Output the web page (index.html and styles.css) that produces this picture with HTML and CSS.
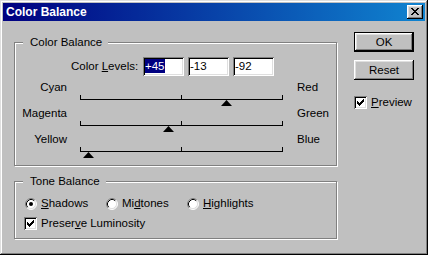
FILE: index.html
```html
<!DOCTYPE html>
<html>
<head>
<meta charset="utf-8">
<link rel="stylesheet" href="styles.css">
</head>
<body>
<div class="window">
  <div class="titlebar">
    <span class="title">Color Balance</span>
    <div class="close"><svg class="x" width="8" height="7" viewBox="0 0 8 7" shape-rendering="crispEdges"><path fill="#000" d="M0 0h2v1H0zM6 0h2v1H6zM1 1h2v1H1zM5 1h2v1H5zM2 2h4v1H2zM3 3h2v1H3zM2 4h4v1H2zM1 5h2v1H1zM5 5h2v1H5zM0 6h2v1H0zM6 6h2v1H6z"/></svg></div>
  </div>
  <div class="body">
    <div class="main">
      <div class="group g1">
        <div class="legend">Color Balance</div>
        <div class="levels">
          <span class="levels-label">Color <u>L</u>evels:</span>
          <div class="field"><span class="sel">+45</span></div>
          <div class="field">-13</div>
          <div class="field">-92</div>
        </div>
        <div class="slider first">
          <div class="slider-labels"><span class="lab-l">Cyan</span><span class="lab-r">Red</span></div>
          <div class="track"><svg class="thumb" style="left:141px" width="11" height="6" viewBox="0 0 11 6"><path d="M5.5 0L11 6H0z" fill="#000"/></svg></div>
        </div>
        <div class="slider">
          <div class="slider-labels"><span class="lab-l">Magenta</span><span class="lab-r">Green</span></div>
          <div class="track"><svg class="thumb" style="left:83px" width="11" height="6" viewBox="0 0 11 6"><path d="M5.5 0L11 6H0z" fill="#000"/></svg></div>
        </div>
        <div class="slider">
          <div class="slider-labels"><span class="lab-l">Yellow</span><span class="lab-r">Blue</span></div>
          <div class="track"><svg class="thumb" style="left:3px" width="11" height="6" viewBox="0 0 11 6"><path d="M5.5 0L11 6H0z" fill="#000"/></svg></div>
        </div>
      </div>
      <div class="group g2">
        <div class="legend">Tone Balance</div>
        <div class="radios">
          <div class="radio-opt">
            <svg class="radio" width="12" height="12" viewBox="0 0 12 12"><circle cx="6" cy="6" r="5" fill="#fff"/><path d="M2.11 9.89A5.5 5.5 0 0 1 9.89 2.11" stroke="#808080" fill="none"/><path d="M9.89 2.11A5.5 5.5 0 0 1 2.11 9.89" stroke="#fff" fill="none"/><path d="M2.82 9.18A4.5 4.5 0 0 1 9.18 2.82" stroke="#000" fill="none"/><path d="M9.18 2.82A4.5 4.5 0 0 1 2.82 9.18" stroke="#dfdfdf" fill="none"/><circle cx="6" cy="6" r="2" fill="#000"/></svg>
            <span><u>S</u>hadows</span>
          </div>
          <div class="radio-opt">
            <svg class="radio" width="12" height="12" viewBox="0 0 12 12"><circle cx="6" cy="6" r="5" fill="#fff"/><path d="M2.11 9.89A5.5 5.5 0 0 1 9.89 2.11" stroke="#808080" fill="none"/><path d="M9.89 2.11A5.5 5.5 0 0 1 2.11 9.89" stroke="#fff" fill="none"/><path d="M2.82 9.18A4.5 4.5 0 0 1 9.18 2.82" stroke="#000" fill="none"/><path d="M9.18 2.82A4.5 4.5 0 0 1 2.82 9.18" stroke="#dfdfdf" fill="none"/></svg>
            <span>Mi<u>d</u>tones</span>
          </div>
          <div class="radio-opt">
            <svg class="radio" width="12" height="12" viewBox="0 0 12 12"><circle cx="6" cy="6" r="5" fill="#fff"/><path d="M2.11 9.89A5.5 5.5 0 0 1 9.89 2.11" stroke="#808080" fill="none"/><path d="M9.89 2.11A5.5 5.5 0 0 1 2.11 9.89" stroke="#fff" fill="none"/><path d="M2.82 9.18A4.5 4.5 0 0 1 9.18 2.82" stroke="#000" fill="none"/><path d="M9.18 2.82A4.5 4.5 0 0 1 2.82 9.18" stroke="#dfdfdf" fill="none"/></svg>
            <span><u>H</u>ighlights</span>
          </div>
        </div>
        <div class="check-row">
          <div class="checkbox"><svg width="7" height="7" viewBox="0 0 7 7" shape-rendering="crispEdges"><path fill="#000" d="M6 0h1v1H6zM5 1h2v1H5zM0 2h1v1H0zM4 2h3v1H4zM0 3h2v1H0zM3 3h3v1H3zM0 4h5v1H0zM1 5h3v1H1zM2 6h1v1H2z"/></svg></div>
          <span>Preser<u>v</u>e Luminosity</span>
        </div>
      </div>
    </div>
    <div class="side">
      <div class="btn default"><span>OK</span></div>
      <div class="btn reset"><span>Reset</span></div>
      <div class="check-row preview">
        <div class="checkbox"><svg width="7" height="7" viewBox="0 0 7 7" shape-rendering="crispEdges"><path fill="#000" d="M6 0h1v1H6zM5 1h2v1H5zM0 2h1v1H0zM4 2h3v1H4zM0 3h2v1H0zM3 3h3v1H3zM0 4h5v1H0zM1 5h3v1H1zM2 6h1v1H2z"/></svg></div>
        <span><u>P</u>review</span>
      </div>
    </div>
  </div>
</div>
</body>
</html>
```

FILE: styles.css
```css
html, body {
  margin: 0;
  padding: 0;
  background: #c0c0c0;
}
body {
  font-family: "Liberation Sans", Arial, sans-serif;
  font-size: 11.5px;
  line-height: 13px;
  color: #000;
}
u {
  text-decoration: underline;
  text-underline-offset: 1px;
}
.window {
  width: 428px;
  height: 255px;
  box-sizing: border-box;
  background: #c0c0c0;
  padding: 3px;
  box-shadow: inset -1px -1px #000, inset 1px 1px #dfdfdf, inset -2px -2px #808080, inset 2px 2px #fff;
  display: flex;
  flex-direction: column;
}
.titlebar {
  height: 18px;
  display: flex;
  align-items: center;
  justify-content: space-between;
  padding: 0 2px 0 3px;
  background: linear-gradient(to right, #000080, #1084d0);
  color: #fff;
  font-weight: bold;
  font-size: 12px;
}
.close {
  width: 16px;
  height: 14px;
  box-sizing: border-box;
  background: #c0c0c0;
  box-shadow: inset -1px -1px #000, inset 1px 1px #fff, inset -2px -2px #808080, inset 2px 2px #dfdfdf;
  padding: 3px 0 0 4px;
}
.x {
  display: block;
}
.body {
  flex: 1;
  display: flex;
  padding: 11px;
  gap: 17px;
}
.main {
  width: 323px;
  display: flex;
  flex-direction: column;
}
.group {
  border: 1px solid #808080;
  box-shadow: inset 1px 1px #fff, 1px 1px #fff;
  display: flex;
  flex-direction: column;
  align-items: flex-start;
}
.g1 {
  margin-top: 10px;
  padding-bottom: 7px;
}
.g2 {
  margin-top: 15px;
  padding-bottom: 8px;
}
.legend {
  margin: -7px 0 0 8px;
  padding: 0 6px 0 7px;
  background: #c0c0c0;
  height: 13px;
}
.levels {
  display: flex;
  align-items: center;
  margin-top: 8px;
  padding-left: 56px;
  height: 19px;
}
.levels-label {
  width: 72px;
}
.field {
  width: 41px;
  height: 19px;
  box-sizing: border-box;
  background: #fff;
  box-shadow: inset 1px 1px #808080, inset -1px -1px #fff, inset 2px 2px #000, inset -2px -2px #dfdfdf;
  padding: 3px 2px 0;
  margin-right: 4px;
}
.sel {
  background: #000080;
  color: #fff;
  padding: 1px 0;
}
.slider {
  margin-top: 1px;
}
.slider.first {
  margin-top: 5px;
}
.slider-labels {
  display: flex;
  height: 13px;
}
.lab-l {
  width: 52px;
  text-align: right;
}
.lab-r {
  margin-left: 230px;
}
.track {
  position: relative;
  width: 203px;
  height: 4px;
  border-bottom: 1px solid #000;
  margin: 1px 0 6px 65px;
  background:
    linear-gradient(#000, #000) 0 0 / 1px 100% no-repeat,
    linear-gradient(#000, #000) 101px 0 / 1px 100% no-repeat,
    linear-gradient(#000, #000) 202px 0 / 1px 100% no-repeat;
}
.thumb {
  position: absolute;
  top: 5px;
  display: block;
}
.radios {
  display: flex;
  margin-top: 9px;
  padding-left: 10px;
  height: 13px;
}
.radio-opt {
  width: 81px;
  display: flex;
  align-items: center;
}
.radio {
  display: block;
  margin-right: 4px;
  flex: none;
}
.check-row {
  display: flex;
  align-items: center;
  height: 13px;
  margin-top: 7px;
  padding-left: 9px;
}
.checkbox {
  width: 13px;
  height: 13px;
  box-sizing: border-box;
  flex: none;
  background: #fff;
  box-shadow: inset 1px 1px #808080, inset -1px -1px #fff, inset 2px 2px #000, inset -2px -2px #dfdfdf;
  padding: 3px 0 0 3px;
  margin-right: 4px;
}
.checkbox svg {
  display: block;
}
.side {
  width: 60px;
  display: flex;
  flex-direction: column;
}
.btn {
  height: 20px;
  box-sizing: border-box;
  display: flex;
  align-items: center;
  justify-content: center;
  background: #c0c0c0;
}
.btn.default {
  border: 1px solid #000;
  box-shadow: inset -1px -1px #000, inset 1px 1px #fff, inset -2px -2px #808080, inset 2px 2px #dfdfdf;
}
.btn.reset {
  margin-top: 8px;
  box-shadow: inset -1px -1px #000, inset 1px 1px #fff, inset -2px -2px #808080, inset 2px 2px #dfdfdf;
}
.check-row.preview {
  margin-top: 16px;
  padding-left: 0;
}
```
